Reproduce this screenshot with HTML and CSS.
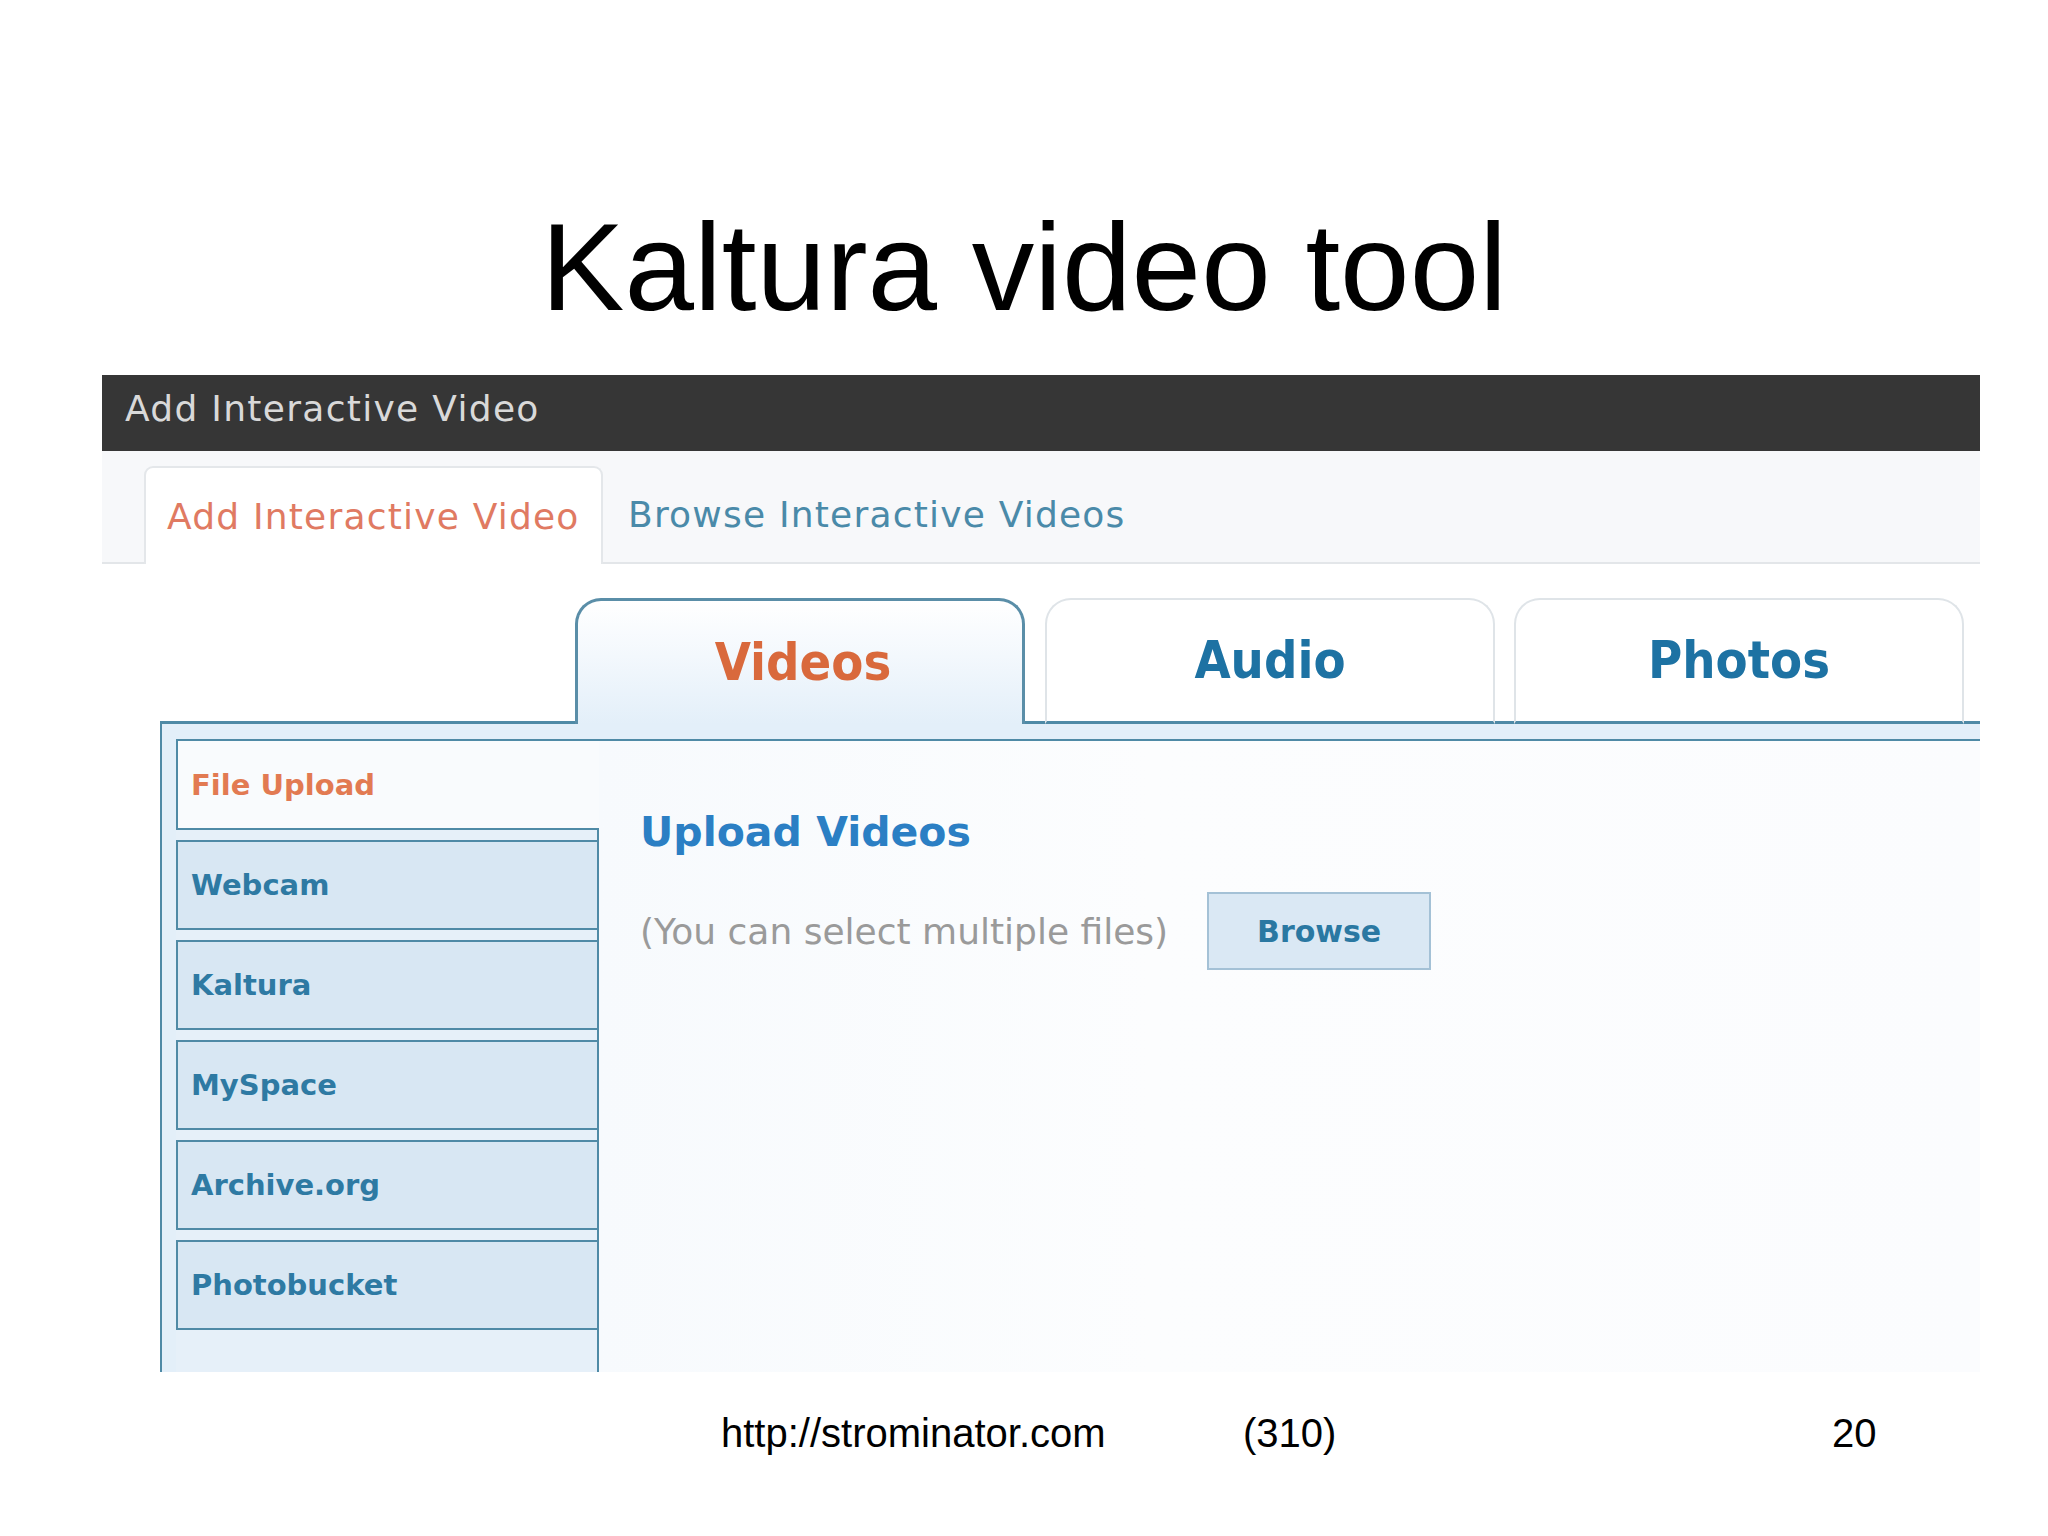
FILE: index.html
```html
<!DOCTYPE html>
<html>
<head>
<meta charset="utf-8">
<link rel="stylesheet" href="styles.css">
</head>
<body>
<div class="slide">
  <div class="title">Kaltura video tool</div>
  <div class="shot">
    <div class="titlebar">Add Interactive Video</div>
    <div class="subbar">
      <div class="subtab active">Add Interactive Video</div>
      <div class="subtab">Browse Interactive Videos</div>
    </div>
    <div class="tabsrow">
      <div class="line lead"></div>
      <div class="tab videos"><span>Videos</span></div>
      <div class="line gap1"></div>
      <div class="tab plain"><span>Audio</span></div>
      <div class="line gap2"></div>
      <div class="tab plain"><span>Photos</span></div>
      <div class="line rest"></div>
    </div>
    <div class="panel">
      <div class="inner">
        <div class="sidebar">
          <div class="side-active">File Upload</div>
          <div class="side-list">
            <div class="side-item">Webcam</div>
            <div class="side-item">Kaltura</div>
            <div class="side-item">MySpace</div>
            <div class="side-item">Archive.org</div>
            <div class="side-item">Photobucket</div>
          </div>
        </div>
        <div class="main">
          <div class="upload-title">Upload Videos</div>
          <div class="upload-row">
            <span class="hint">(You can select multiple files)</span>
            <span class="browse">Browse</span>
          </div>
        </div>
      </div>
    </div>
  </div>
  <div class="footer">
    <div class="f-url">http://strominator.com</div>
    <div class="f-phone">(310)</div>
    <div class="f-num">20</div>
  </div>
</div>
</body>
</html>
```
FILE: styles.css
```css
html, body {
  margin: 0;
  padding: 0;
  background: #ffffff;
}
.slide {
  width: 2048px;
  height: 1536px;
  overflow: hidden;
  background: #ffffff;
}
.title {
  padding-top: 192px;
  height: 150px;
  line-height: 150px;
  text-align: center;
  font-family: "Liberation Sans", Arial, sans-serif;
  font-size: 125px;
  color: #000000;
}
.shot {
  margin-top: 33px;
  margin-left: 102px;
  width: 1878px;
  font-family: "DejaVu Sans", Verdana, sans-serif;
}
.titlebar {
  height: 76px;
  box-sizing: border-box;
  padding: 0 0 10px 23px;
  display: flex;
  align-items: center;
  background: #363636;
  color: #d9d9d9;
  font-size: 36px;
  letter-spacing: 1.3px;
}
.subbar {
  display: flex;
  height: 96px;
  padding: 15px 0 0 42px;
  background: #f7f8fa;
  border-bottom: 2px solid #e3e6e9;
}
.subtab {
  display: flex;
  align-items: center;
  font-size: 36px;
  letter-spacing: 1.2px;
  color: #4a8aa9;
  padding-left: 25px;
}
.subtab.active {
  width: 459px;
  box-sizing: border-box;
  padding-left: 21px;
  margin-bottom: -2px;
  background: #ffffff;
  border: 2px solid #e4e7ea;
  border-bottom: none;
  border-radius: 9px 9px 0 0;
  color: #e07a62;
}
.tabsrow {
  display: flex;
  align-items: flex-end;
  height: 160px;
  margin-left: 58px;
}
.line {
  height: 0;
  border-bottom: 3px solid #4f8aa6;
}
.line.lead { width: 415px; }
.line.gap1 { width: 20px; }
.line.gap2 { width: 19px; }
.line.rest { flex: 1; }
.tab {
  width: 450px;
  height: 126px;
  box-sizing: border-box;
  border-radius: 26px 26px 0 0;
  display: flex;
  align-items: center;
  justify-content: center;
  font-family: "DejaVu Sans Condensed", "DejaVu Sans", sans-serif;
  font-stretch: condensed;
  font-weight: bold;
  font-size: 52px;
}
.tab span {
  padding-bottom: 2px;
}
.tab.videos {
  border: 3px solid #5a8ea8;
  border-bottom: none;
  background: linear-gradient(#ffffff 0%, #f3f8fd 45%, #e3eff9 100%);
  color: #d9693c;
}
.tab.videos span {
  padding-left: 6px;
}
.tab.plain {
  border: 2px solid #dfe4e8;
  border-bottom: 3px solid #4f8aa6;
  background: #ffffff;
  color: #1d72a3;
}
.panel {
  margin-left: 58px;
  height: 648px;
  box-sizing: border-box;
  border-left: 2px solid #4f8aa6;
  background: #e3eff9;
  padding: 15px 0 0 14px;
  overflow: hidden;
}
.inner {
  display: flex;
  height: 100%;
  border-top: 2px solid #4f8aa6;
}
.sidebar {
  width: 423px;
  display: flex;
  flex-direction: column;
}
.side-active,
.side-item {
  display: flex;
  align-items: center;
  box-sizing: border-box;
  padding-left: 13px;
  font-weight: bold;
  font-size: 29px;
}
.side-active {
  height: 89px;
  border-left: 2px solid #4f8aa6;
  border-bottom: 2px solid #4f8aa6;
  background: #f9fbfd;
  color: #e27a52;
}
.side-list {
  flex: 1;
  display: flex;
  flex-direction: column;
  gap: 10px;
  padding-top: 10px;
  border-right: 2px solid #4f8aa6;
  background: #e6f0f9;
}
.side-item {
  height: 90px;
  border: 2px solid #4f8aa6;
  border-right: none;
  background: #d8e7f3;
  color: #2e7aa3;
}
.main {
  flex: 1;
  padding: 66px 0 0 41px;
  background: linear-gradient(90deg, #f7fafd 0%, #fcfdfe 40%, #fbfcfe 100%);
}
.upload-title {
  height: 50px;
  line-height: 50px;
  font-weight: bold;
  font-size: 41px;
  color: #2b7fc4;
}
.upload-row {
  margin-top: 35px;
  display: flex;
  align-items: center;
}
.hint {
  font-size: 36px;
  color: #9a9a9a;
}
.browse {
  margin-left: 39px;
  width: 224px;
  height: 78px;
  box-sizing: border-box;
  display: flex;
  align-items: center;
  justify-content: center;
  background: #dae8f4;
  border: 2px solid #a4c1d6;
  font-weight: bold;
  font-size: 30px;
  color: #2a78a2;
}
.footer {
  margin-top: 38px;
  display: flex;
  height: 46px;
  line-height: 46px;
  font-family: "Liberation Sans", Arial, sans-serif;
  font-size: 40px;
  color: #000000;
}
.f-url {
  margin-left: 721px;
  width: 522px;
}
.f-phone {
  width: 100px;
  white-space: nowrap;
}
.f-num {
  margin-left: 489px;
}
```
